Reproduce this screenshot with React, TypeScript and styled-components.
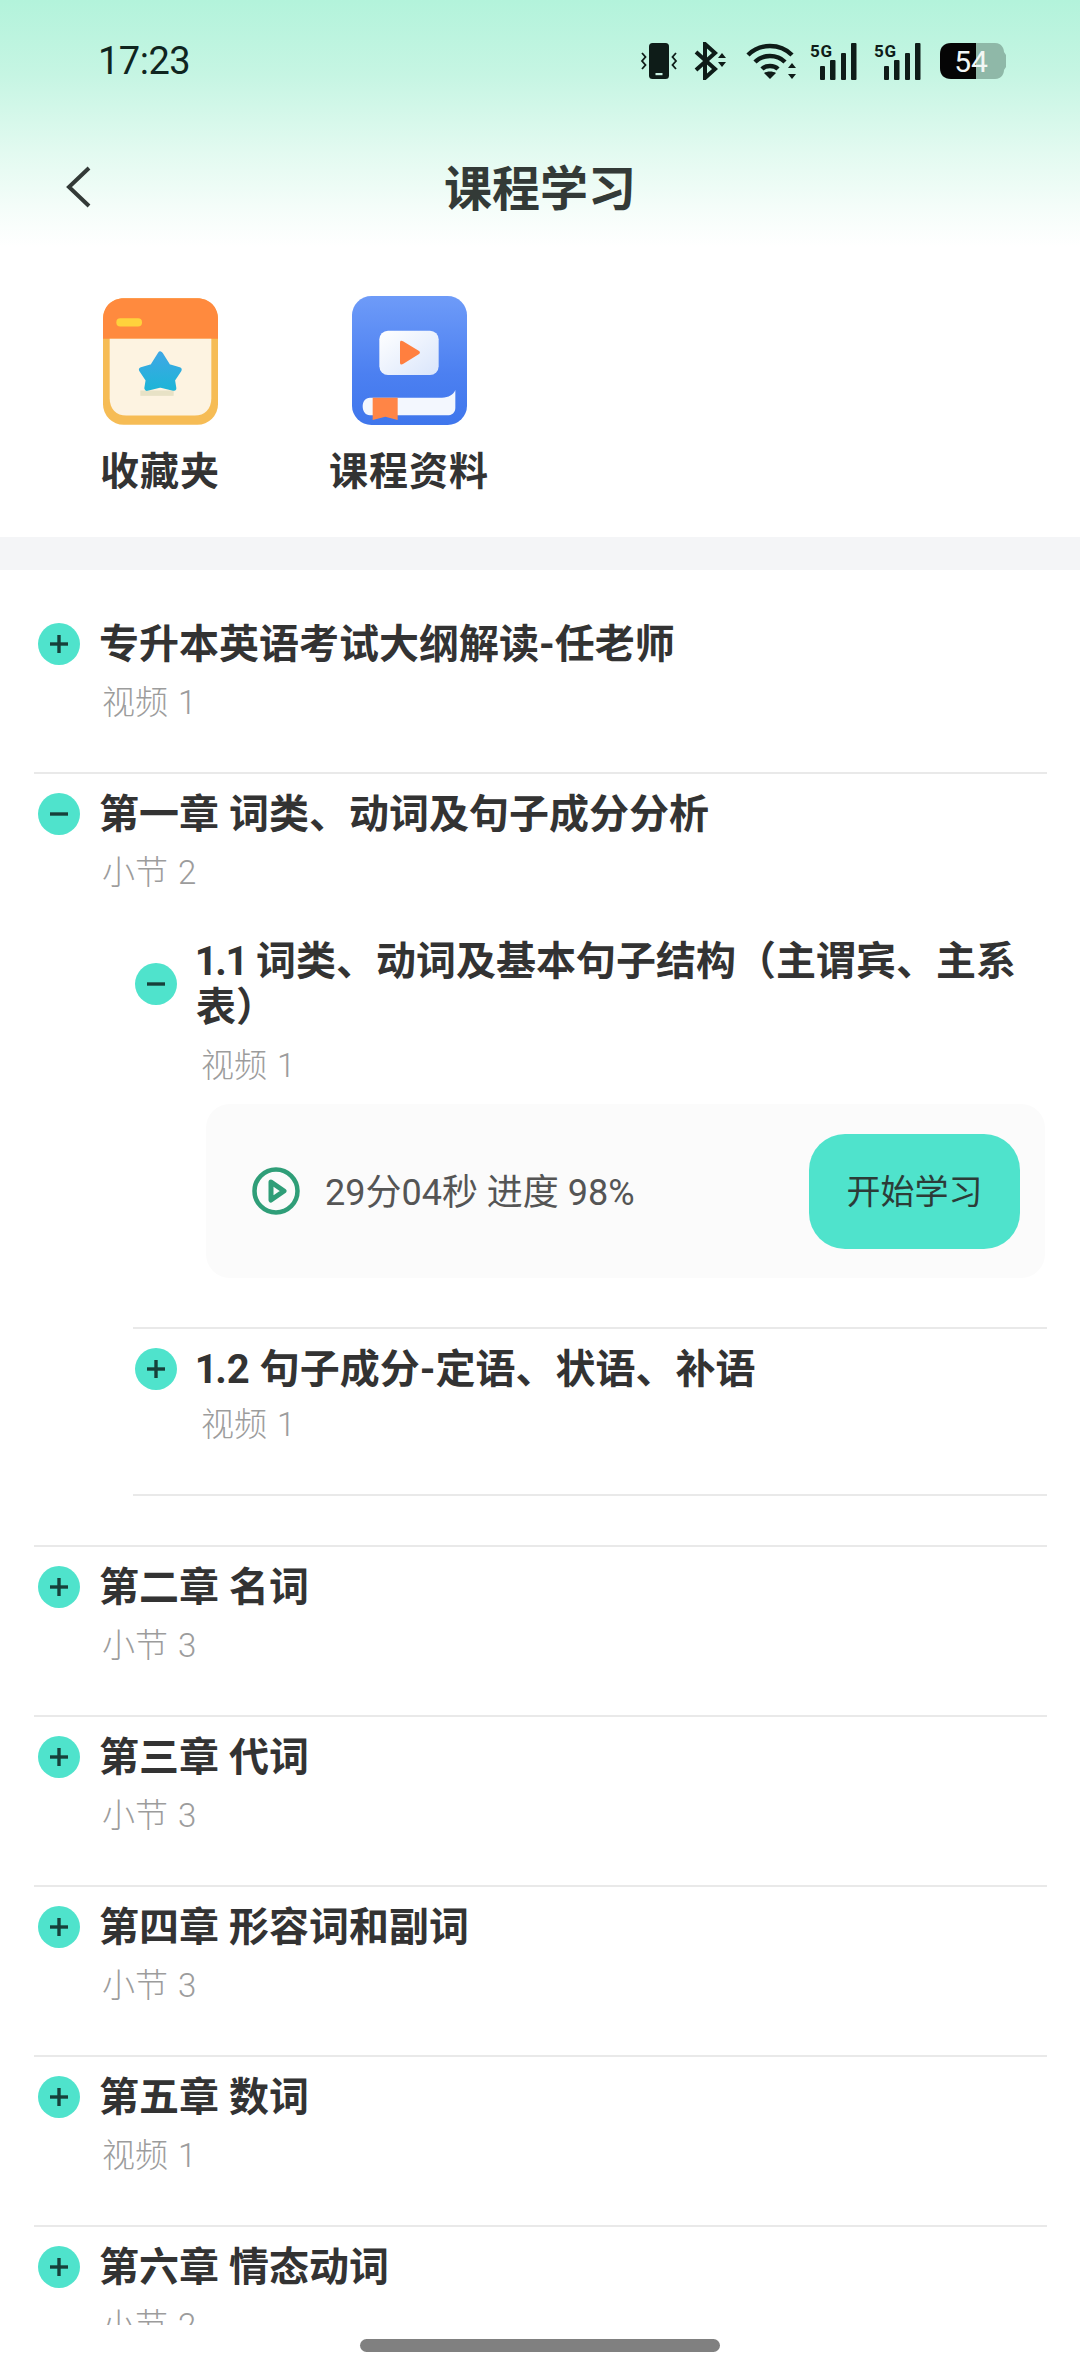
import React from 'react';
import styled, { createGlobalStyle } from 'styled-components';

const GlobalStyle = createGlobalStyle`
  html, body {
    margin: 0;
    padding: 0;
    background: #FFFFFF;
  }
  * {
    box-sizing: border-box;
  }
`;

const Page = styled.div`
  width: 1080px;
  height: 2373px;
  display: flex;
  flex-direction: column;
  overflow: hidden;
  background: #FFFFFF;
  font-family: Roboto, "Noto Sans CJK SC", sans-serif;
  color: #333333;
`;

const TopArea = styled.div`
  flex: none;
  height: 252px;
  background: linear-gradient(180deg, #B3F3DB 0%, #C6F5E3 30%, #E2FAF0 60%, #F4FDF9 82%, #FFFFFF 98%);
`;

const StatusBar = styled.div`
  height: 122px;
  display: flex;
  align-items: center;
  justify-content: space-between;
  padding: 0 74px 0 98px;
`;

const Time = styled.div`
  font-size: 38px;
  letter-spacing: -0.5px;
  color: #10251F;
`;

const StatusIcons = styled.div`
  display: flex;
  align-items: center;
  gap: 16px;
`;

const WifiSlot = styled.div`
  display: flex;
  margin-right: -4px;
`;

const BatterySlot = styled.div`
  display: flex;
  margin-left: 2px;
`;

const NavBar = styled.div`
  height: 130px;
  display: grid;
  grid-template-columns: 1fr auto 1fr;
  align-items: center;
  padding: 0 64px;
`;

const NavTitle = styled.div`
  font-size: 48px;
  font-weight: 700;
  color: #333A37;
  margin-top: -4px;
`;

const Shortcuts = styled.div`
  flex: none;
  height: 285px;
  display: flex;
  gap: 49px;
  padding: 44px 0 0 60px;
`;

const Shortcut = styled.div`
  width: 200px;
  display: flex;
  flex-direction: column;
  align-items: center;
`;

const ShortcutIcon = styled.div`
  height: 129px;
  display: flex;
  align-items: flex-end;
`;

const ShortcutLabel = styled.div`
  margin-top: 22px;
  font-size: 39px;
  line-height: 50px;
  font-weight: 700;
  letter-spacing: 1px;
  white-space: nowrap;
`;

const Band = styled.div`
  flex: none;
  height: 33px;
  background: #F4F5F7;
`;

const List = styled.div`
  flex: none;
  height: 1755px;
  overflow: hidden;
  padding: 34px 33px 0 34px;
`;

const Section = styled.div`
  padding: 16px 0 49px;
  border-bottom: 2px solid #E9E9E9;
`;

const Head = styled.div`
  display: flex;
  align-items: center;
  gap: 19px;
  padding-left: 4px;
`;

const SubHead = styled(Head)`
  padding-left: 2px;
`;

const Toggle = styled.div`
  flex: none;
  width: 42px;
  height: 42px;
  border-radius: 50%;
  background: #4FE3CC;
  display: flex;
  align-items: center;
  justify-content: center;
`;

const Title = styled.div`
  padding-top: 2px;
  font-size: 40px;
  line-height: 46px;
  font-weight: 700;
  font-variant-numeric: proportional-nums;
  color: #333333;
`;

const Meta = styled.div`
  margin: 15px 0 0 68px;
  font-size: 33px;
  line-height: 40px;
  font-weight: 300;
  word-spacing: 2px;
  color: #9C9C9C;
`;

const SubMeta = styled(Meta)<{ $tight?: boolean }>`
  margin-top: ${(props) => (props.$tight ? '12px' : '15px')};
`;

const SubList = styled.div`
  margin: 28px 0 0 99px;
`;

const SubItem = styled.div`
  padding: 16px 0 49px;
`;

const SubItemLast = styled(SubItem)`
  border-top: 2px solid #E9E9E9;
  border-bottom: 2px solid #E9E9E9;
`;

const LessonCard = styled.div`
  margin: 18px 2px 0 73px;
  height: 174px;
  display: flex;
  align-items: center;
  justify-content: space-between;
  padding: 0 25px 0 46px;
  border-radius: 24px;
  background: #FBFBFB;
`;

const LessonInfo = styled.div`
  display: flex;
  align-items: center;
  gap: 25px;
  font-size: 36px;
  color: #555555;
`;

const LessonText = styled.span`
  margin-top: -4px;
`;

const StartButton = styled.div`
  width: 211px;
  height: 115px;
  display: flex;
  align-items: center;
  justify-content: center;
  padding-bottom: 3px;
  border-radius: 36px;
  background: #4FE3CC;
  font-size: 34px;
  color: #2C3C38;
`;

const HomeArea = styled.div`
  flex: 1;
  display: flex;
  justify-content: center;
  padding-top: 14px;
`;

const HomeBar = styled.div`
  width: 360px;
  height: 13px;
  border-radius: 7px;
  background: #808080;
`;

const IconText = styled.text`
  font-family: Roboto, sans-serif;
`;

function VibrateIcon() {
  return (
    <svg width="38" height="38" viewBox="0 0 38 38">
      <rect x="9" y="1" width="20" height="36" rx="3.5" fill="#0E1C18" />
      <rect x="15.5" y="31" width="7" height="2.2" fill="#C9F3E4" />
      <g fill="none" stroke="#0E1C18" strokeWidth="1.8">
        <path d="M2 11 L5.5 15 L2 19 L5.5 23 L2 27" />
        <path d="M36 11 L32.5 15 L36 19 L32.5 23 L36 27" />
      </g>
    </svg>
  );
}

function BluetoothIcon() {
  return (
    <svg width="36" height="38" viewBox="0 0 36 38">
      <path d="M2 10 L21 27 L11 36 L11 2 L21 11 L2 28" fill="none" stroke="#0E1C18" strokeWidth="4" />
      <path d="M28 11 L32 16 L24 16 Z M28 25 L32 20 L24 20 Z" fill="#0E1C18" />
    </svg>
  );
}

function WifiIcon() {
  return (
    <svg width="52" height="38" viewBox="0 0 52 38">
      <g fill="none" stroke="#0E1C18" strokeWidth="4.5">
        <path d="M2 13 C14 1 34 1 46 13" />
        <path d="M9 20 C17 12 31 12 39 20" />
        <path d="M16 27 C20 23 28 23 32 27" />
      </g>
      <path d="M24 37 L18 31 C21 29 27 29 30 31 Z" fill="#0E1C18" />
      <path d="M46 21 L50 26 L42 26 Z M46 37 L50 32 L42 32 Z" fill="#0E1C18" />
    </svg>
  );
}

function SignalIcon() {
  return (
    <svg width="48" height="38" viewBox="0 0 48 38">
      <IconText x="0" y="15" fontSize="17" fontWeight="700" fill="#0E1C18" textLength="22">5G</IconText>
      <rect x="10" y="24" width="5" height="14" rx="1" fill="#0E1C18" />
      <rect x="20" y="18" width="5.5" height="20" rx="1" fill="#0E1C18" />
      <rect x="31" y="11" width="5" height="27" rx="1" fill="#0E1C18" />
      <rect x="41" y="1" width="5.5" height="37" rx="1" fill="#0E1C18" />
    </svg>
  );
}

function BatteryIcon() {
  return (
    <svg width="66" height="36" viewBox="0 0 66 36">
      <path d="M36 0 H55 C62 0 64 6 64 9 L66 12 V24 L64 27 C64 30 62 36 55 36 H36 Z" fill="#8FB8A8" />
      <path d="M11 0 H36 V36 H11 C4 36 0 32 0 25 V11 C0 4 4 0 11 0 Z" fill="#050505" />
      <IconText x="31" y="29" fontSize="30" textAnchor="middle" fill="#F2F7F5">54</IconText>
    </svg>
  );
}

function BackIcon() {
  return (
    <svg width="28" height="44" viewBox="0 0 28 44">
      <path d="M25 3 L5 22 L25 41" fill="none" stroke="#333A37" strokeWidth="4" />
    </svg>
  );
}

function FolderIcon() {
  return (
    <svg width="115" height="127" viewBox="0 0 345 380">
      <defs>
        <linearGradient id="starFill" x1="0" y1="0" x2="0" y2="1">
          <stop offset="0" stopColor="#3DA8E4" />
          <stop offset="1" stopColor="#1FB4D8" />
        </linearGradient>
      </defs>
      <rect x="0" y="0" width="345" height="380" rx="62" fill="#F6BC55" />
      <path d="M0 122 V62 C0 26 26 0 62 0 H283 C319 0 345 26 345 62 V122 Z" fill="#FF8A3E" />
      <rect x="40" y="60" width="77" height="25" rx="12" fill="#FFD23C" />
      <path d="M20 122 H325 V300 C325 332 305 352 275 352 H70 C40 352 20 332 20 300 Z" fill="#FDF3E1" />
      <rect x="112" y="277" width="100" height="16" fill="#E8E2C6" />
      <path
        d="M172 168 L195 205 L228 215 L208 245 L212 270 L172 260 L132 270 L136 245 L116 215 L149 205 Z"
        fill="url(#starFill)"
        stroke="url(#starFill)"
        strokeWidth="16"
        strokeLinejoin="round"
      />
    </svg>
  );
}

function BookIcon() {
  return (
    <svg width="115" height="129" viewBox="0 0 345 387">
      <defs>
        <linearGradient id="bookFill" x1="0" y1="0" x2="0" y2="1">
          <stop offset="0" stopColor="#6E9BF8" />
          <stop offset="0.6" stopColor="#4C80F1" />
          <stop offset="1" stopColor="#3F76EC" />
        </linearGradient>
        <linearGradient id="screenFill" x1="0" y1="0" x2="1" y2="1">
          <stop offset="0" stopColor="#FFFFFF" />
          <stop offset="1" stopColor="#D9E5FB" />
        </linearGradient>
      </defs>
      <rect x="0" y="0" width="345" height="387" rx="58" fill="url(#bookFill)" />
      <rect x="82" y="104" width="178" height="133" rx="26" fill="url(#screenFill)" />
      <path d="M144 140 C144 134 148 133 153 136 L200 164 C205 167 205 172 200 175 L153 204 C148 207 144 205 144 200 Z" fill="#FF7F3F" />
      <path d="M54 305 H270 C290 305 304 296 310 282 V335 C310 350 300 358 285 358 H54 C40 358 32 345 32 331 C32 317 40 305 54 305 Z" fill="#F3F7FE" />
      <path d="M62 305 H137 V372 L100 362 L62 372 Z" fill="#FF8546" />
    </svg>
  );
}

function Sign({ open }: { open?: boolean }) {
  return (
    <svg width="20" height="20" viewBox="0 0 20 20">
      <path d="M1 10 H19" stroke="#17403A" strokeWidth="3.4" />
      {!open && <path d="M10 1 V19" stroke="#17403A" strokeWidth="3.4" />}
    </svg>
  );
}

function PlayIcon() {
  return (
    <svg width="48" height="48" viewBox="0 0 48 48">
      <circle cx="24" cy="24" r="21.5" fill="none" stroke="#2F9E78" strokeWidth="4.5" />
      <path d="M19 15 L32 24 L19 33 Z" fill="none" stroke="#2F9E78" strokeWidth="5" strokeLinejoin="round" />
    </svg>
  );
}

const chapters = [
  { title: '第二章 名词', meta: '小节 3' },
  { title: '第三章 代词', meta: '小节 3' },
  { title: '第四章 形容词和副词', meta: '小节 3' },
  { title: '第五章 数词', meta: '视频 1' },
  { title: '第六章 情态动词', meta: '小节 2' },
];

function App() {
  return (
    <Page>
      <GlobalStyle />
      <TopArea>
        <StatusBar>
          <Time>17:23</Time>
          <StatusIcons>
            <VibrateIcon />
            <BluetoothIcon />
            <WifiSlot>
              <WifiIcon />
            </WifiSlot>
            <SignalIcon />
            <SignalIcon />
            <BatterySlot>
              <BatteryIcon />
            </BatterySlot>
          </StatusIcons>
        </StatusBar>
        <NavBar>
          <BackIcon />
          <NavTitle>课程学习</NavTitle>
        </NavBar>
      </TopArea>

      <Shortcuts>
        <Shortcut>
          <ShortcutIcon>
            <FolderIcon />
          </ShortcutIcon>
          <ShortcutLabel>收藏夹</ShortcutLabel>
        </Shortcut>
        <Shortcut>
          <ShortcutIcon>
            <BookIcon />
          </ShortcutIcon>
          <ShortcutLabel>课程资料</ShortcutLabel>
        </Shortcut>
      </Shortcuts>

      <Band />

      <List>
        <Section>
          <Head>
            <Toggle><Sign /></Toggle>
            <Title>专升本英语考试大纲解读-任老师</Title>
          </Head>
          <Meta>视频 1</Meta>
        </Section>

        <Section>
          <Head>
            <Toggle><Sign open /></Toggle>
            <Title>第一章 词类、动词及句子成分分析</Title>
          </Head>
          <Meta>小节 2</Meta>
          <SubList>
            <SubItem>
              <SubHead>
                <Toggle><Sign open /></Toggle>
                <Title>1.1 词类、动词及基本句子结构（主谓宾、主系表）</Title>
              </SubHead>
              <SubMeta>视频 1</SubMeta>
              <LessonCard>
                <LessonInfo>
                  <PlayIcon />
                  <LessonText>29分04秒 进度 98%</LessonText>
                </LessonInfo>
                <StartButton>开始学习</StartButton>
              </LessonCard>
            </SubItem>
            <SubItemLast>
              <SubHead>
                <Toggle><Sign /></Toggle>
                <Title>1.2 句子成分-定语、状语、补语</Title>
              </SubHead>
              <SubMeta $tight>视频 1</SubMeta>
            </SubItemLast>
          </SubList>
        </Section>

        {chapters.map((chapter) => (
          <Section key={chapter.title}>
            <Head>
              <Toggle><Sign /></Toggle>
              <Title>{chapter.title}</Title>
            </Head>
            <Meta>{chapter.meta}</Meta>
          </Section>
        ))}
      </List>

      <HomeArea>
        <HomeBar />
      </HomeArea>
    </Page>
  );
}

export default App;
